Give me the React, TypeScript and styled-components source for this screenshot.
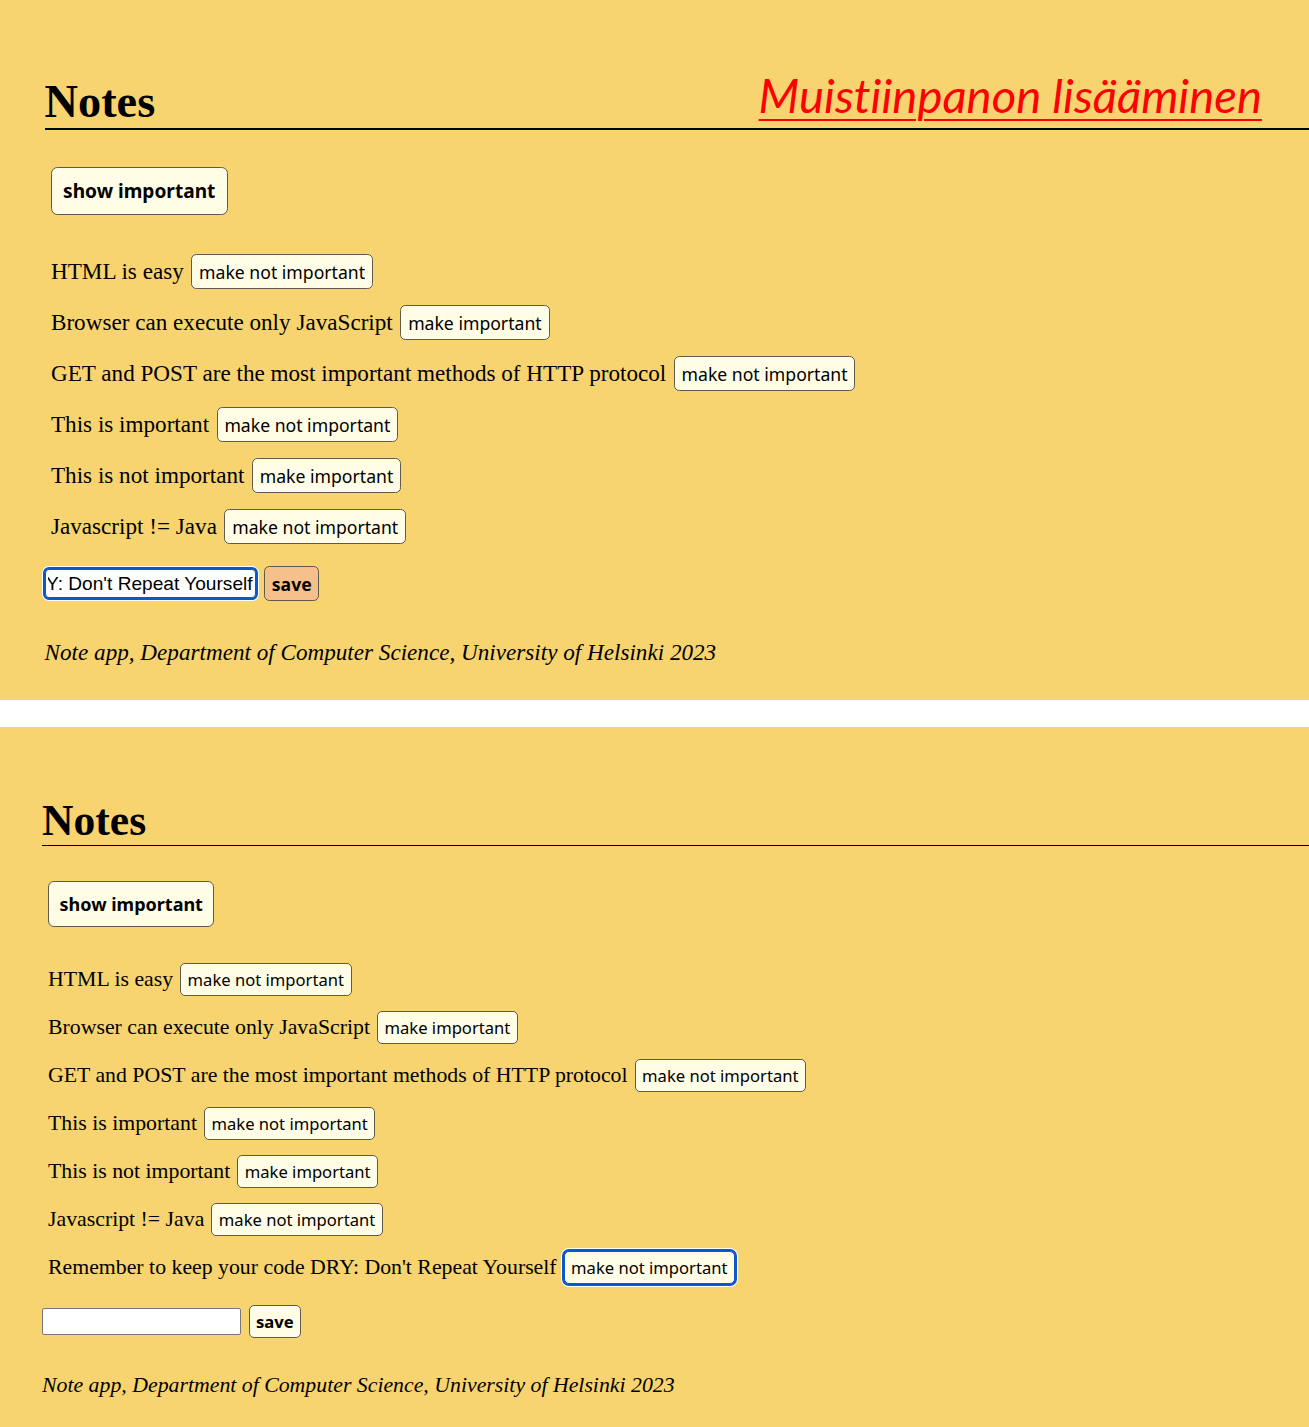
import * as React from "react";
import { useEffect, useRef } from "react";
import styled, { createGlobalStyle } from "styled-components";

const GlobalStyle = createGlobalStyle`
  html, body {
    margin: 0;
    padding: 0;
    background: #ffffff;
  }
  * {
    box-sizing: border-box;
  }
`;

type Note = { content: string; important: boolean };

const notes: Note[] = [
  { content: "HTML is easy", important: true },
  { content: "Browser can execute only JavaScript", important: false },
  { content: "GET and POST are the most important methods of HTTP protocol", important: true },
  { content: "This is important", important: true },
  { content: "This is not important", important: false },
  { content: "Javascript != Java", important: true },
];

const newNote: Note = {
  content: "Remember to keep your code DRY: Don't Repeat Yourself",
  important: true,
};

const Page = styled.div`
  display: flex;
  flex-direction: column;
  gap: 27px;
`;

// --u is one "pixel" of the captured app, so the zoomed capture on top
// can reuse the same parts with a bigger unit
const Panel = styled.section<{ $k: number; $top: number }>`
  --u: ${({ $k }) => $k}px;
  position: relative;
  height: 700px;
  overflow: hidden;
  background: #f7d46f;
  padding: ${({ $top }) => $top}px 0 0 calc(var(--u) * 42);
  font-family: "Liberation Serif", "Times New Roman", serif;
  color: #000;
`;

const Title = styled.h1<{ $line: number }>`
  margin: 0;
  font-size: calc(var(--u) * 43.6);
  font-weight: 700;
  line-height: normal;
  border-bottom: ${({ $line }) => $line}px solid #000;
`;

const Annotation = styled.div`
  position: absolute;
  top: 71px;
  right: 47px;
  font-family: Lato, "Open Sans", sans-serif;
  font-style: italic;
  font-size: 47.3px;
  font-variant-ligatures: none;
  line-height: 1;
  color: #ff0000;
  text-decoration: underline;
  text-decoration-thickness: 2px;
  text-underline-offset: 6px;
`;

const Indented = styled.div`
  padding-left: calc(var(--u) * 6);
  margin-top: calc(var(--u) * 34.5);
`;

const CreamButton = styled.button<{ $focused?: boolean; $active?: boolean }>`
  display: inline-flex;
  align-items: center;
  justify-content: center;
  font-family: "Noto Sans", "DejaVu Sans", sans-serif;
  color: #000;
  background: ${({ $active }) => ($active ? "#f6c08b" : "#fffde6")};
  border: 1px solid ${({ $focused }) => ($focused ? "#0b57d0" : "#5f5a4c")};
  box-shadow: ${({ $focused }) => ($focused ? "0 0 0 2px #0b57d0, 0 0 0 3px #fff" : "none")};
  cursor: pointer;
  white-space: nowrap;
`;

const ShowButton = styled(CreamButton)`
  height: calc(var(--u) * 46);
  padding: 0 calc(var(--u) * 10.5);
  border-radius: calc(var(--u) * 6);
  font-size: calc(var(--u) * 18);
  font-weight: 700;
`;

const NoteList = styled.ul`
  list-style: none;
  margin: calc(var(--u) * 36.5) 0 0;
  padding: 0;
  display: flex;
  flex-direction: column;
  gap: calc(var(--u) * 15);
`;

const NoteRow = styled.li`
  display: flex;
  align-items: center;
  gap: calc(var(--u) * 7);
  height: calc(var(--u) * 33);
  font-size: calc(var(--u) * 21.8);
`;

const ToggleButton = styled(CreamButton)`
  height: calc(var(--u) * 33);
  padding: 0 calc(var(--u) * 6.5);
  border-radius: calc(var(--u) * 5);
  font-size: calc(var(--u) * 16.6);
`;

const NoteForm = styled.form`
  display: flex;
  align-items: center;
  gap: calc(var(--u) * 8);
  margin-top: calc(var(--u) * 21);
`;

const NoteInput = styled.input<{ $focused?: boolean }>`
  width: calc(var(--u) * 199);
  height: calc(var(--u) * 27);
  padding: 0 calc(var(--u) * 2);
  background: #fff;
  font-family: "Liberation Sans", Arial, sans-serif;
  font-size: calc(var(--u) * 18);
  color: #000;
  border: 1px solid ${({ $focused }) => ($focused ? "#0b57d0" : "#767676")};
  border-radius: ${({ $focused }) => ($focused ? "4px" : "2px")};
  outline: none;
  box-shadow: ${({ $focused }) => ($focused ? "0 0 0 2px #0b57d0, 0 0 0 3px #fff" : "none")};
`;

const SaveButton = styled(CreamButton)`
  height: calc(var(--u) * 33);
  padding: 0 calc(var(--u) * 6);
  border-radius: calc(var(--u) * 5);
  font-size: calc(var(--u) * 16.6);
  font-weight: 700;
`;

const Footer = styled.div`
  margin-top: calc(var(--u) * 35);
  font-style: italic;
  font-size: calc(var(--u) * 21.8);
`;

type NotesAppProps = {
  k: number;
  top: number;
  line: number;
  list: Note[];
  draft: string;
  typing: boolean;
  focusLast?: boolean;
  annotation?: string;
};

const NotesApp = ({ k, top, line, list, draft, typing, focusLast, annotation }: NotesAppProps) => {
  const inputRef = useRef<HTMLInputElement>(null);

  useEffect(() => {
    // the typed text is scrolled to its end, as while typing
    if (inputRef.current) inputRef.current.scrollLeft = inputRef.current.scrollWidth;
  }, [draft]);

  return (
    <Panel $k={k} $top={top}>
      <Title $line={line}>Notes</Title>
      {annotation && <Annotation>{annotation}</Annotation>}
      <Indented>
        <ShowButton type="button">show important</ShowButton>
        <NoteList>
          {list.map((note, i) => (
            <NoteRow key={i}>
              {note.content}
              <ToggleButton type="button" $focused={focusLast && i === list.length - 1}>
                {note.important ? "make not important" : "make important"}
              </ToggleButton>
            </NoteRow>
          ))}
        </NoteList>
      </Indented>
      <NoteForm onSubmit={(e) => e.preventDefault()}>
        <NoteInput ref={inputRef} value={draft} readOnly $focused={typing} />
        <SaveButton type="submit" $active={typing}>
          save
        </SaveButton>
      </NoteForm>
      <Footer>Note app, Department of Computer Science, University of Helsinki 2023</Footer>
    </Panel>
  );
};

const App = () => {
  return (
    <Page>
      <GlobalStyle />
      <NotesApp
        k={1.062}
        top={75}
        line={2}
        list={notes}
        draft={newNote.content}
        typing
        annotation="Muistiinpanon lisääminen"
      />
      <NotesApp k={1} top={68} line={1} list={[...notes, newNote]} draft="" typing={false} focusLast />
    </Page>
  );
};

export default App;
